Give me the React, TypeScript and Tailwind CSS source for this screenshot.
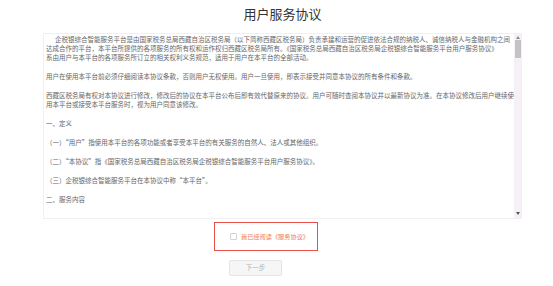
const paragraphs = [
  {
    indent: true,
    text: [
      "企税银综合智能服务平台是由国家税务总局西藏自治区税务局（以下简称西藏区税务局）负责承建和运营的促进依法合规的纳税人、诚信纳税人与金融机构之间达成合作的平台，本平台所提供的各项服务的所有权和运作权归西藏区税务局所有。《国家税务总局西藏自治区税务局企税银综合智能服务平台用户服务协议》",
      "系由用户与本平台的各项服务所订立的相关权利义务规范，适用于用户在本平台的全部活动。",
    ],
  },
  {
    text: ["用户在使用本平台前必须仔细阅读本协议条款，否则用户无权使用。用户一旦使用，即表示接受并同意本协议的所有条件和条款。"],
  },
  {
    text: [
      "西藏区税务局有权对本协议进行修改，修改后的协议在本平台公布后即有效代替原来的协议。用户可随时查阅本协议并以最新协议为准。在本协议修改后用户继续使用本平台或接受本平台服务时，视为用户同意该修改。",
    ],
  },
  { text: ["一、定义"] },
  { text: ["（一）“用户”指使用本平台的各项功能或者享受本平台的有关服务的自然人、法人或其他组织。"] },
  { text: ["（二）“本协议”指《国家税务总局西藏自治区税务局企税银综合智能服务平台用户服务协议》。"] },
  { text: ["（三）企税银综合智能服务平台在本协议中称“本平台”。"] },
  { text: ["二、服务内容"] },
];

function Scrollbar() {
  return (
    <div className="flex w-[7px] shrink-0 flex-col items-center bg-[#f6f1f6]">
      <svg width="4" height="3" viewBox="0 0 4 3" className="mt-[2px]">
        <path d="M2 0 L4 3 L0 3 Z" fill="#8a8a8a" />
      </svg>
      <div className="mt-[1px] h-[18px] w-[6px] bg-[#c3c3c3]" />
      <div className="flex-1" />
      <svg width="4" height="3" viewBox="0 0 4 3" className="mb-[3px]">
        <path d="M0 0 L4 0 L2 3 Z" fill="#555555" />
      </svg>
    </div>
  );
}

export default function App() {
  const font = "font-['Noto_Sans_CJK_SC','Noto_Sans',sans-serif]";

  return (
    <div className={`h-[286px] w-[553px] bg-white ${font}`}>
      <div className="ml-[43px] w-[479px] pt-[6px]">
        <h1 className="text-center text-[13px] leading-[16px] font-normal text-[#333333]">用户服务协议</h1>

        <div className="mt-[11px] flex h-[186px] border border-[#f0f0f0]">
          <div className="flex-1 overflow-hidden pt-[1px] pl-[2px] text-[6.5px] leading-[9px] text-[#666666]">
            {paragraphs.map((p, i) => (
              <p key={i} className={`mb-[10px] ${p.indent ? "indent-[9px]" : ""}`}>
                {p.text.map((line, j) => (
                  <span key={j}>
                    {j > 0 && <br />}
                    {line}
                  </span>
                ))}
              </p>
            ))}
          </div>
          <Scrollbar />
        </div>

        <div className="mt-[3px] ml-[171px] flex h-[29px] w-[104px] items-center border border-[#e8514a] pl-[15px]">
          <span className="h-[7px] w-[7px] rounded-[1px] border border-[#d4d4d4] bg-white" />
          <span className="ml-[4px] text-[6.2px] leading-[8px] text-[#ef7a55]">我已经阅读《服务协议》</span>
        </div>

        <button
          type="button"
          disabled
          className="mt-[9px] ml-[186px] flex h-[16px] w-[53px] items-center justify-center rounded-[2px] border border-[#e3e3e3] bg-[#f6f6f6] text-[6.5px] text-[#b5b5b5]"
        >
          下一步
        </button>
      </div>
    </div>
  );
}
